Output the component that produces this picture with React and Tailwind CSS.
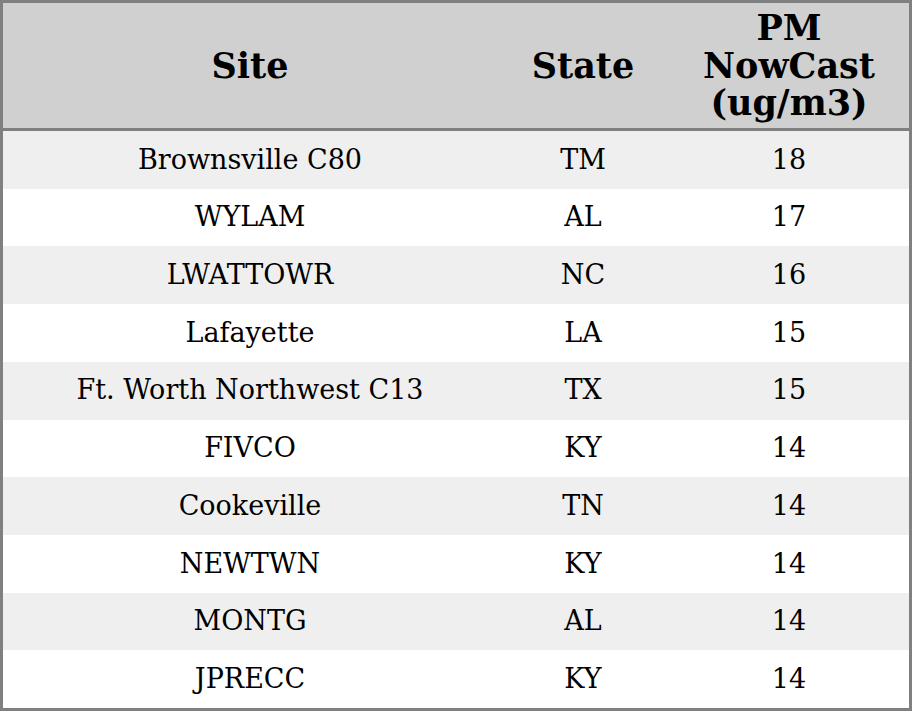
import React from "react";

const rows = [
  ["Brownsville C80", "TM", "18"],
  ["WYLAM", "AL", "17"],
  ["LWATTOWR", "NC", "16"],
  ["Lafayette", "LA", "15"],
  ["Ft. Worth Northwest C13", "TX", "15"],
  ["FIVCO", "KY", "14"],
  ["Cookeville", "TN", "14"],
  ["NEWTWN", "KY", "14"],
  ["MONTG", "AL", "14"],
  ["JPRECC", "KY", "14"],
];

export default function App() {
  return (
    <div
      className="w-[912px] h-[711px] flex flex-col border-[3px] border-[#808080] bg-white text-black"
      style={{ fontFamily: '"DejaVu Serif", serif' }}
    >
      {/* header */}
      <div className="h-[128px] shrink-0 flex bg-[#d0d0d0] border-b-[3px] border-[#808080] font-bold text-[35px] leading-[37.5px]">
        <div className="w-[494px] flex items-center justify-center">Site</div>
        <div className="w-[172px] flex items-center justify-center">State</div>
        <div className="flex-1 flex items-center justify-center text-center">
          PM
          <br />
          NowCast
          <br />
          (ug/m3)
        </div>
      </div>

      {rows.map(([site, state, pm], i) => (
        <div
          key={i}
          className={`flex-1 flex text-[27px] ${i % 2 === 0 ? "bg-[#efefef]" : "bg-white"}`}
        >
          <div className="w-[494px] flex items-center justify-center">{site}</div>
          <div className="w-[172px] flex items-center justify-center">{state}</div>
          <div className="flex-1 flex items-center justify-center">{pm}</div>
        </div>
      ))}
    </div>
  );
}
